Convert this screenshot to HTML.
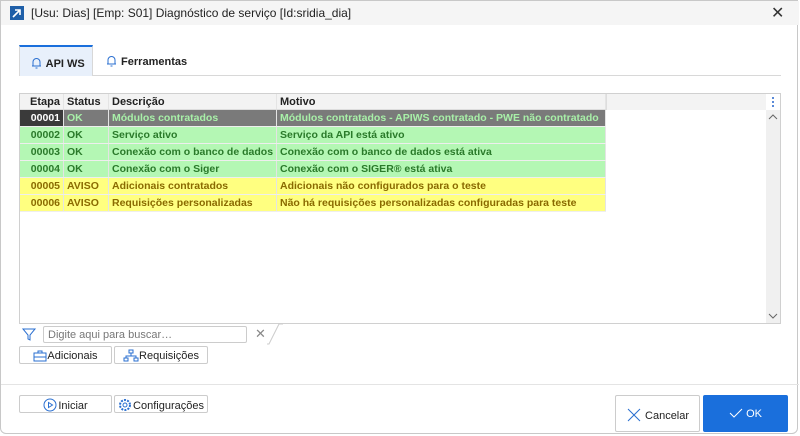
<!DOCTYPE html>
<html><head><meta charset="utf-8"><style>
*{margin:0;padding:0;box-sizing:border-box}
body{width:800px;height:436px;background:#fff;font-family:"Liberation Sans",sans-serif;font-size:11px;position:relative;overflow:hidden;color:#222}
.win{position:absolute;left:0;top:0;width:798px;height:434px;border:1px solid #c8c8c8;border-radius:0 0 6px 6px;background:#fff}
.title{position:absolute;left:0;top:0;width:798px;height:24px;background:#f5f5f5}
.title span{position:absolute;left:30px;top:5px;font-size:12px;color:#222}
.ico{position:absolute;left:9px;top:5px;width:14px;height:14px;background:#1f5fa8}
.x{position:absolute;left:770px;top:2px;font-size:16px;color:#333}
.tab{position:absolute;top:44px;height:31px;font-weight:bold;font-size:11px;padding-top:9px}
.tabline{position:absolute;left:18px;top:74px;width:762px;height:1px;background:#d8d8d8}
.grid{position:absolute;left:18px;top:92px;width:762px;height:231px;border:1px solid #d0d0d0;background:#fff}
.hdr{position:absolute;left:0;top:0;width:586px;height:16px;background:#f3f3f3;border-bottom:1px solid #ddd;font-weight:bold}
.hdr2{position:absolute;left:586px;top:0;width:160px;height:16px;background:#f3f3f3;border-left:1px solid #ddd}
.c{position:absolute;top:0;height:100%;padding:2px 3px;white-space:nowrap;overflow:hidden;border-right:1px solid #e4e4e4}
.row{position:absolute;left:0;width:586px;height:17px;font-weight:bold;font-size:10.5px;border-bottom:1px solid #eee}
.g{background:#b4f7b4;color:#2a7a2a}
.y{background:#ffff80;color:#8a6a00}
.sb{position:absolute;left:746px;top:16px;width:14px;height:213px;background:#f0f0f0}
.btn{position:absolute;height:18px;border:1px solid #ccc;border-radius:2px;background:#fff;font-size:11px;padding:2px 0 0 0;text-align:center}
.btn svg{vertical-align:-3px}
</style></head><body>
<div class="win">
<div class="title"><div class="ico"><svg width="14" height="14"><path d="M3 11L10 4M5 4h5v5" stroke="#fff" stroke-width="1.6" fill="none"/></svg></div><span>[Usu: Dias] [Emp: S01] Diagnóstico de serviço [Id:sridia_dia]</span><div class="x">✕</div></div>
<div class="tabline"></div>
<div class="tab" style="left:18px;width:74px;background:#e8f0fb;border-top:2px solid #1a6fdc;border-left:1px solid #d8d8d8;border-right:1px solid #d8d8d8;padding-left:10px"><svg width="13" height="13" style="vertical-align:-2px"><path d="M2 10h9M3 10V6a3.5 3.5 0 017 0v4M5.5 12h2" stroke="#2a6fd0" fill="none"/></svg> API WS</div>
<div class="tab" style="left:102px;padding-left:2px;padding-top:9px"><svg width="13" height="13" style="vertical-align:-2px"><path d="M2 10h9M3 10V6a3.5 3.5 0 017 0v4M5.5 12h2" stroke="#2a6fd0" fill="none"/></svg> Ferramentas</div>
<div class="grid">
<div class="hdr"><div class="c" style="left:0;width:44px;text-align:right">Etapa</div><div class="c" style="left:44px;width:45px">Status</div><div class="c" style="left:89px;width:168px">Descrição</div><div class="c" style="left:257px;width:329px">Motivo</div></div>
<div class="hdr2"></div>
<div class="sb"><svg style="position:absolute;left:2px;top:3px" width="10" height="8"><path d="M1 6l4-4 4 4" stroke="#666" fill="none"/></svg><svg style="position:absolute;left:2px;bottom:3px" width="10" height="8"><path d="M1 2l4 4 4-4" stroke="#666" fill="none"/></svg></div>
<div style="position:absolute;left:752px;top:3px;width:2px;height:10px;border-left:2px dotted #5a8ad8"></div>
<div class="row" style="top:16px;background:#7a7a7a;color:#a8f0a8"><div class="c" style="left:0;width:44px;background:#3a3a3a;color:#fff;text-align:right">00001</div><div class="c" style="left:44px;width:45px">OK</div><div class="c" style="left:89px;width:168px">Módulos contratados</div><div class="c" style="left:257px;width:329px">Módulos contratados - APIWS contratado - PWE não contratado</div></div>
<div class="row g" style="top:33px"><div class="c" style="left:0;width:44px;text-align:right">00002</div><div class="c" style="left:44px;width:45px">OK</div><div class="c" style="left:89px;width:168px">Serviço ativo</div><div class="c" style="left:257px;width:329px">Serviço da API está ativo</div></div>
<div class="row g" style="top:50px"><div class="c" style="left:0;width:44px;text-align:right">00003</div><div class="c" style="left:44px;width:45px">OK</div><div class="c" style="left:89px;width:168px">Conexão com o banco de dados</div><div class="c" style="left:257px;width:329px">Conexão com o banco de dados está ativa</div></div>
<div class="row g" style="top:67px"><div class="c" style="left:0;width:44px;text-align:right">00004</div><div class="c" style="left:44px;width:45px">OK</div><div class="c" style="left:89px;width:168px">Conexão com o Siger</div><div class="c" style="left:257px;width:329px">Conexão com o SIGER® está ativa</div></div>
<div class="row y" style="top:84px"><div class="c" style="left:0;width:44px;text-align:right">00005</div><div class="c" style="left:44px;width:45px">AVISO</div><div class="c" style="left:89px;width:168px">Adicionais contratados</div><div class="c" style="left:257px;width:329px">Adicionais não configurados para o teste</div></div>
<div class="row y" style="top:101px"><div class="c" style="left:0;width:44px;text-align:right">00006</div><div class="c" style="left:44px;width:45px">AVISO</div><div class="c" style="left:89px;width:168px">Requisições personalizadas</div><div class="c" style="left:257px;width:329px">Não há requisições personalizadas configuradas para teste</div></div>
</div>
<svg style="position:absolute;left:20px;top:325px" width="16" height="16"><path d="M2 3h12l-5 6v5l-2-1V9z" stroke="#2a6fd0" fill="none"/></svg>
<div style="position:absolute;left:42px;top:325px;width:204px;height:17px;border:1px solid #ccc;border-radius:2px;color:#777;padding:2px 4px;font-size:11px">Digite aqui para buscar…</div>
<div style="position:absolute;left:254px;top:325px;color:#888;font-size:13px">✕</div>
<svg style="position:absolute;left:266px;top:322px" width="16" height="22"><path d="M0 21h2l10-20h4" stroke="#ccc" fill="none"/></svg>
<div class="btn" style="left:18px;top:345px;width:93px"><svg width="14" height="13"><rect x="1" y="4" width="12" height="8" stroke="#2a6fd0" fill="none"/><path d="M5 4V2h4v2M1 8h12" stroke="#2a6fd0" fill="none"/></svg>Adicionais</div>
<div class="btn" style="left:113px;top:345px;width:94px"><svg width="16" height="13"><rect x="6" y="1" width="4" height="3" stroke="#2a6fd0" fill="none"/><rect x="1" y="9" width="4" height="3" stroke="#2a6fd0" fill="none"/><rect x="11" y="9" width="4" height="3" stroke="#2a6fd0" fill="none"/><path d="M8 4v3M3 9V7h10v2" stroke="#2a6fd0" fill="none"/></svg>Requisições</div>
<div style="position:absolute;left:0;top:383px;width:798px;height:1px;background:#e4e4e4"></div>
<div class="btn" style="left:18px;top:394px;width:93px"><svg width="15" height="14"><circle cx="7" cy="7" r="6" stroke="#2a6fd0" fill="none"/><path d="M5.5 4.5v5l4-2.5z" stroke="#2a6fd0" fill="none"/></svg>Iniciar</div>
<div class="btn" style="left:113px;top:394px;width:94px"><svg width="15" height="14"><circle cx="7" cy="7" r="5" stroke="#2a6fd0" stroke-dasharray="2 1.2" stroke-width="2" fill="none"/><circle cx="7" cy="7" r="2" stroke="#2a6fd0" fill="none"/></svg>Configurações</div>
<div class="btn" style="left:614px;top:394px;width:85px;height:37px;padding-top:11px"><svg width="16" height="16" style="vertical-align:-4px"><path d="M2 2l12 12M14 2L2 14" stroke="#2a6fd0" fill="none"/></svg> Cancelar</div>
<div class="btn" style="left:702px;top:394px;width:85px;height:37px;padding-top:11px;background:#1a6fdc;border-color:#1a6fdc;color:#fff"><svg width="14" height="12" style="vertical-align:-2px"><path d="M1 6l4 4 8-8" stroke="#fff" fill="none"/></svg> OK</div>
</div>
</body></html>
